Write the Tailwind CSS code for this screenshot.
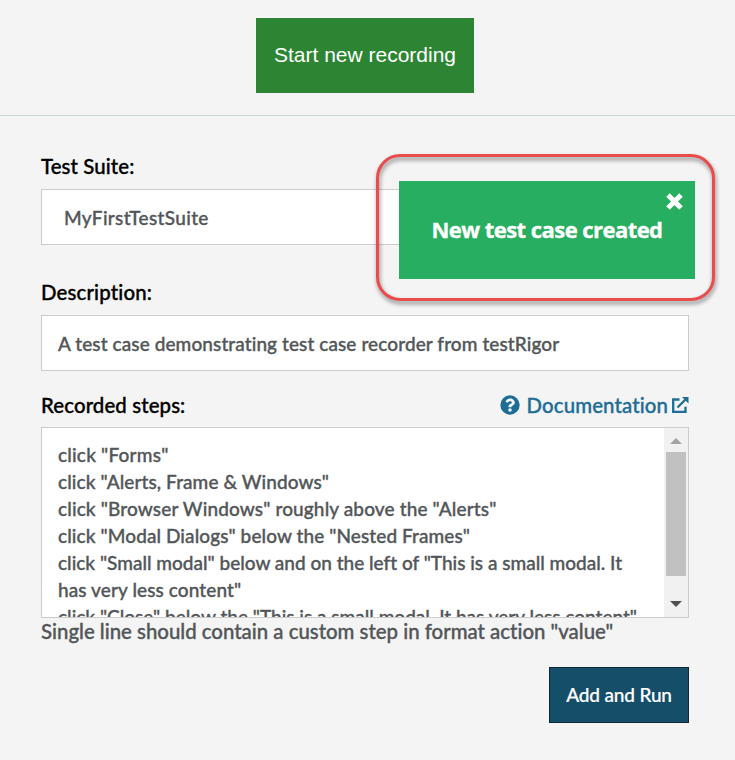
<!DOCTYPE html>
<html lang="en">
<head>
<meta charset="utf-8">
<title>Test case recorder</title>
<script src="https://cdn.jsdelivr.net/npm/@tailwindcss/browser@4"></script>
</head>
<body class="relative h-[760px] w-[735px] overflow-hidden bg-[#f4f4f4] font-['Lato',sans-serif] text-[20.4px] leading-[27px] font-medium text-[#525659] [font-variant-ligatures:none] [-webkit-text-stroke:0.35px]">
  <header class="flex h-[116px] justify-center border-b border-[#ccd6d9] pr-[5px] pt-[18px]">
    <button class="h-[75px] w-[218px] whitespace-nowrap bg-[#2d8534] pb-[2px] font-['Liberation_Sans',sans-serif] text-[21px] font-normal text-white [-webkit-text-stroke:0px]">Start new recording</button>
  </header>

  <main class="flex flex-col pl-[41px] pr-[46px] pt-[37px]">
    <label class="h-[36px] tracking-[0.1px] text-black"><span>Test Suite:</span></label>
    <div class="flex h-[56px] items-center border border-[#ccc] bg-white pl-[22px] pt-[1px] text-[19px] tracking-[0.34px]"><span>MyFirstTestSuite</span></div>

    <label class="mt-[34px] h-[36px] tracking-[0.17px] text-black"><span>Description:</span></label>
    <div class="flex h-[56px] items-center border border-[#ccc] bg-white pl-[16px] pt-[1px] text-[19px] tracking-[0.09px]"><span>A test case demonstrating test case recorder from testRigor</span></div>

    <div class="mt-[21px] flex h-[35px] justify-between">
      <label class="tracking-[0.12px] text-black"><span>Recorded steps:</span></label>
      <a class="flex text-[#1d6d96]">
        <svg class="mr-[7px] mt-[3px] size-[20px]" viewBox="0 0 512 512" fill="currentColor"><path d="M504 256a248 248 0 1 1-496 0 248 248 0 0 1 496 0zM262.700 90c-54.500 0-89.300 23-116.500 63.800-3.500 5.300-2.400 12.400 2.700 16.300l34.700 26.300c5.200 3.900 12.600 3 16.700-2.100 17.800-22.600 30.100-35.800 57.300-35.800 20.400 0 45.700 13.100 45.700 33 0 15-12.400 22.700-32.500 34C247.100 238.500 216 254.900 216 296v4c0 6.600 5.400 12 12 12h56c6.600 0 12-5.400 12-12v-1.300c0-28.500 83.200-29.600 83.200-106.700 0-58-60.200-102-116.500-102zM256 338a46 46 0 1 0 0 92 46 46 0 0 0 0-92z"/></svg>
        <span class="tracking-[0.12px]">Documentation</span>
        <svg class="ml-[4px] mt-[4px] h-[18px] w-[17px]" viewBox="0 0 17 18" fill="none" stroke="currentColor"><path d="M7.500 3.500H1.200v12.300h12.300v-5M5.500 11.500 14 3" stroke-width="2.300"/><path d="M10 1h6.500v6.500z" fill="currentColor" stroke="none"/></svg>
      </a>
    </div>
    <div class="flex h-[191px] overflow-hidden border border-[#ccc] bg-white">
      <div class="flex-1 whitespace-nowrap pl-[16px] pt-[13px] text-[19px]">
        <p class="tracking-[0.2px]">click "Forms"</p>
        <p class="tracking-[0.09px]">click "Alerts, Frame &amp; Windows"</p>
        <p class="tracking-[0.13px]">click "Browser Windows" roughly above the "Alerts"</p>
        <p class="tracking-[0.09px]">click "Modal Dialogs" below the "Nested Frames"</p>
        <p>click "Small modal" below and on the left of "This is a small modal. It</p>
        <p class="tracking-[0.1px]">has very less content"</p>
        <p>click "Close" below the "This is a small modal. It has very less content"</p>
      </div>
      <div class="flex w-[24px] shrink-0 flex-col items-center bg-[#f1f1f1]">
        <svg class="mt-[10px] h-[6px] w-[12px]" viewBox="0 0 12 6" fill="#a3a3a3"><path d="M0 6 6 0l6 6z"/></svg>
        <div class="mt-[8px] h-[124px] w-[20px] bg-[#c1c1c1]"></div>
        <svg class="mt-[25px] h-[6px] w-[12px]" viewBox="0 0 12 6" fill="#505050"><path d="M0 0h12L6 6z"/></svg>
      </div>
    </div>
    <p><span>Single line should contain a custom step in format action "value"</span></p>
    <button class="mt-[22px] h-[56px] w-[140px] self-end whitespace-nowrap border border-[#0e2735] bg-[#154e69] pb-[1px] text-[19px] tracking-[-0.15px] text-white [-webkit-text-stroke:0.2px]"><span>Add and Run</span></button>
  </main>

  <div class="absolute left-[399px] top-[181px] flex h-[98px] w-[296px] items-center justify-center bg-[#27ae60] pb-[2px] font-['Open_Sans',sans-serif] text-[22px] font-bold tracking-[-0.55px] text-white">
    <span class="whitespace-nowrap">New test case created</span>
    <svg class="absolute right-[12px] top-[12px] size-[17px]" viewBox="0 0 17 17" stroke="#fff" stroke-width="5"><path d="M2 2l13 13M15 2 2 15"/></svg>
  </div>
  <div class="absolute left-[376px] top-[154px] h-[147px] w-[339px] rounded-[24px] border-[3px] border-[#e84c4c] drop-shadow-[1px_3px_2px_rgba(0,0,0,0.45)]"></div>
</body>
</html>
